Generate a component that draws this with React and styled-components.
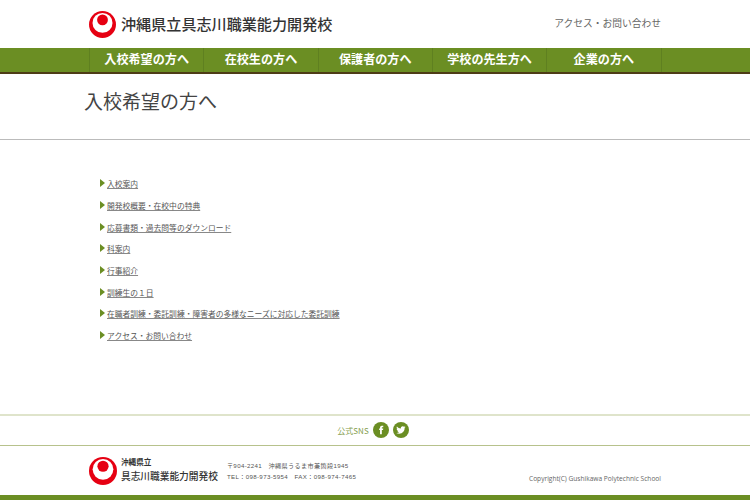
import React from "react";
import styled, { createGlobalStyle } from "styled-components";

const Global = createGlobalStyle`
  html, body { margin: 0; padding: 0; background: #fff; overflow: hidden; }
  body { font-family: "Noto Sans CJK JP", "Liberation Sans", sans-serif; color: #444; }
  * { box-sizing: border-box; }
`;
const Page = styled.div`width: 750px; height: 500px; display: flex; flex-direction: column; overflow: hidden;`;
const Inner = styled.div`width: 572px; margin-left: 89px; display: flex; align-items: center; justify-content: space-between;`;
const Header = styled(Inner)`height: 48px;`;
const Brand = styled.div`display: flex; align-items: center; gap: 5px;`;
const SiteName = styled.div`font-family: "Liberation Serif", "Noto Sans CJK JP", serif; font-size: 15.1px; line-height: 20px; color: #333; font-weight: 500; letter-spacing: 0; position: relative; top: 1px;`;
const TopLink = styled.a`font-size: 9.75px; color: #666; line-height: 14px; position: relative; top: -1px;`;
const NavBar = styled.nav`height: 26px; background: #6b8e23; border-bottom: 2px solid #4e3c16;`;
const NavList = styled.ul`list-style: none; margin: 0 0 0 89px; padding: 0; width: 572.5px; display: flex; height: 24px; border-right: 1px solid #5f8020;`;
const NavItem = styled.li`flex: 1; border-left: 1px solid #5f8020; color: #fff; font-size: 12.1px; font-weight: 700; line-height: 22px; text-align: center;`;
const TitleBand = styled.div`height: 66px; border-bottom: 1px solid #bbb; padding-left: 84px; padding-top: 13px;`;
const Title = styled.h1`margin: 0; font-size: 19px; font-weight: 400; line-height: 27px; color: #444;`;
const Links = styled.ul`list-style: none; margin: 0; padding: 36.7px 0 0 100px; height: 274px; display: flex; flex-direction: column; gap: 6.7px;`;
const LinkRow = styled.li`display: flex; align-items: center; gap: 1px; height: 15px;`;
const Arrow = styled.span`width: 0; height: 0; border-left: 5px solid #6b8e23; border-top: 4px solid transparent; border-bottom: 4px solid transparent; margin-right: 1px; position: relative; top: -1px;`;
const ListLink = styled.a`font-size: 7.77px; line-height: 12px; color: #555; text-decoration: underline; text-decoration-color: #888;`;
const SnsBand = styled.div`height: 32px; border-top: 2px solid #dfe4cb; border-bottom: 1px solid #b7c28c; padding: 0 4px 1px 0; display: flex; align-items: center; justify-content: center; gap: 4px;`;
const SnsLabel = styled.span`font-size: 8px; color: #86a050;`;
const Circle = styled.span`width: 16px; height: 16px; border-radius: 50%; background: #6b8e23; display: flex; align-items: center; justify-content: center;`;
const Footer = styled(Inner)`height: 49px; align-items: center;`;
const FootLeft = styled.div`display: flex; align-items: center; gap: 9px;`;
const FootLogo = styled.div`display: flex; align-items: center; gap: 4px;`;
const FootName = styled.div`font-family: "Liberation Serif", "Noto Sans CJK JP", serif; color: #333; display: flex; flex-direction: column; gap: 2px;`;
const Pref = styled.span`font-size: 7.6px; line-height: 10px; font-weight: 700;`;
const School = styled.span`font-size: 9.7px; line-height: 13px; font-weight: 500;`;
const Contact = styled.div`display: flex; flex-direction: column; gap: 3px; font-family: "Liberation Sans", "Noto Sans CJK JP", sans-serif; font-size: 6.15px; letter-spacing: 0.35px; line-height: 8px; color: #555; margin-top: 1px;`;
const Copy = styled.div`font-family: "Open Sans", "Liberation Sans", sans-serif; font-size: 6.6px; color: #666; align-self: flex-end; margin-bottom: 12px; white-space: nowrap;`;
const BottomBar = styled.div`height: 5px; background: #6b8e23;`;

const Logo = ({ size }) => (
  <svg width={size} height={size} viewBox="0 0 100 100">
    <circle cx="50" cy="50" r="50" fill="#e60012" />
    <circle cx="50" cy="44" r="37" fill="#fff" />
    <circle cx="50" cy="33" r="20" fill="#e60012" />
  </svg>
);

const nav = ["入校希望の方へ", "在校生の方へ", "保護者の方へ", "学校の先生方へ", "企業の方へ"];
const links = ["入校案内", "開発校概要・在校中の特典", "応募書類・過去問等のダウンロード", "科案内", "行事紹介", "訓練生の１日", "在職者訓練・委託訓練・障害者の多様なニーズに対応した委託訓練", "アクセス・お問い合わせ"];

export default function App() {
  return (
    <Page>
      <Global />
      <Header>
        <Brand><Logo size={27} /><SiteName>沖縄県立具志川職業能力開発校</SiteName></Brand>
        <TopLink>アクセス・お問い合わせ</TopLink>
      </Header>
      <NavBar><NavList>{nav.map((n) => <NavItem key={n}>{n}</NavItem>)}</NavList></NavBar>
      <TitleBand><Title>入校希望の方へ</Title></TitleBand>
      <Links>
        {links.map((l) => (
          <LinkRow key={l}><Arrow /><ListLink>{l}</ListLink></LinkRow>
        ))}
      </Links>
      <SnsBand>
        <SnsLabel>公式SNS</SnsLabel>
        <Circle>
          <svg width="10" height="10" viewBox="0 0 24 24" fill="#fff"><path d="M14 8.5V6.6c0-.9.6-1.1 1-1.1h2.4V2h-3.3C10.500 2 9.700 4.600 9.700 6.300v2.200H7.500V12h2.200v10H14V12h2.900l.5-3.500z" /></svg>
        </Circle>
        <Circle>
          <svg width="10" height="10" viewBox="0 0 24 24" fill="#fff"><path d="M23 5c-.8.400-1.700.6-2.600.7.900-.6 1.700-1.400 2-2.500-.9.500-1.900.9-2.900 1.100A4.600 4.600 0 0 0 11.700 8.500C7.900 8.300 4.500 6.500 2.200 3.700c-1.200 2.100-.6 4.800 1.400 6.100-.7 0-1.400-.2-2-.6 0 2.200 1.500 4.100 3.700 4.600-.7.200-1.400.2-2.100.1.600 1.800 2.300 3.100 4.300 3.200A9.300 9.300 0 0 1 .7 19c2 1.300 4.500 2 7 2 8.500 0 13.300-7.200 13-13.600.9-.6 1.700-1.400 2.300-2.400z" /></svg>
        </Circle>
      </SnsBand>
      <Footer>
        <FootLeft>
          <FootLogo>
            <Logo size={28} />
            <FootName><Pref>沖縄県立</Pref><School>具志川職業能力開発校</School></FootName>
          </FootLogo>
          <Contact>
            <span>〒904-2241　沖縄県うるま市兼箇段1945</span>
            <span>TEL：098-973-5954　FAX：098-974-7465</span>
          </Contact>
        </FootLeft>
        <Copy>Copyright(C) Gushikawa Polytechnic School</Copy>
      </Footer>
      <BottomBar />
    </Page>
  );
}
